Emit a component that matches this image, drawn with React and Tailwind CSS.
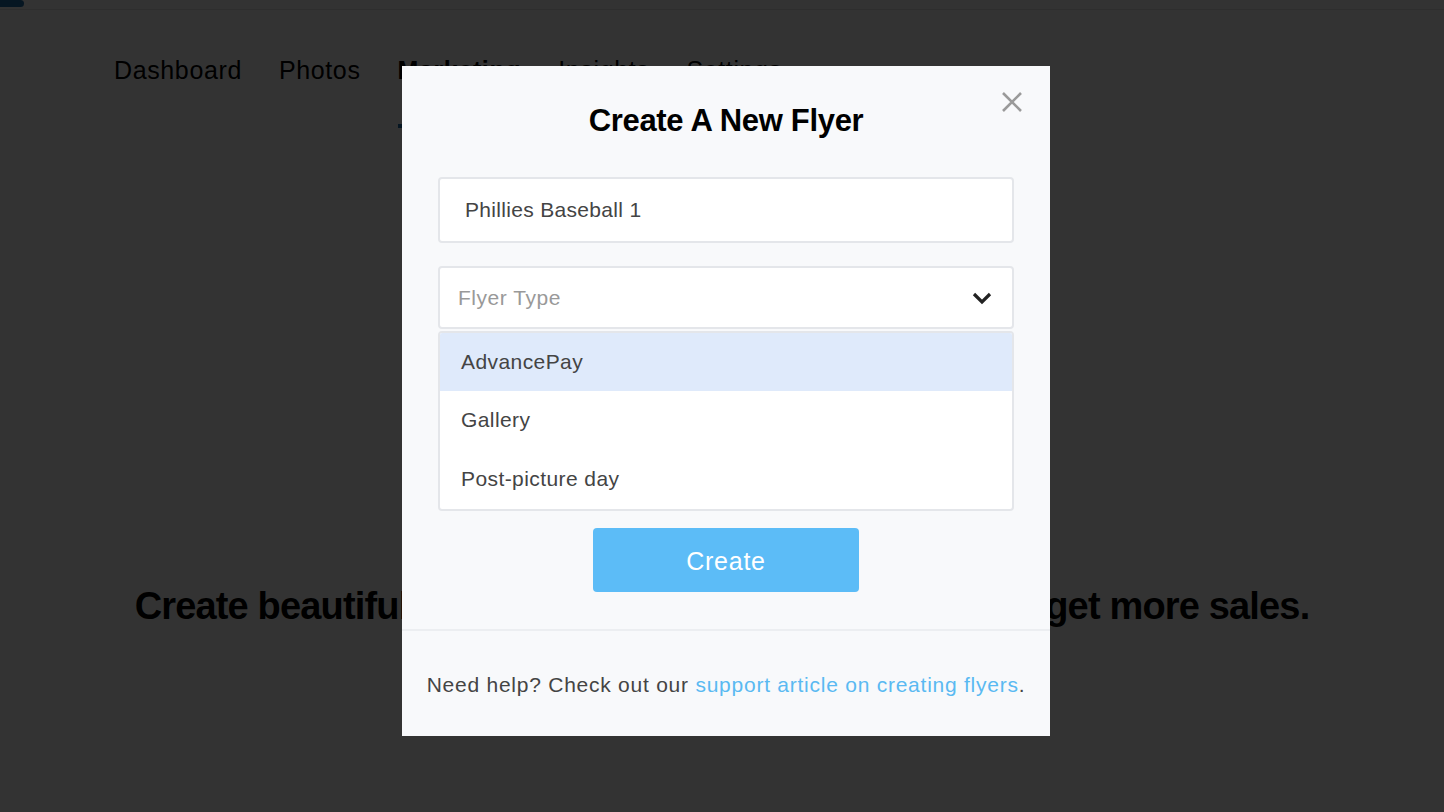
import React from "react";

const navItems = ["Dashboard", "Photos", "Marketing", "Insights", "Settings"];

const App = () => {
  return (
    <div
      className="relative w-full h-[812px] overflow-hidden bg-white"
      style={{ fontFamily: '"Liberation Sans", Arial, sans-serif' }}
    >
      {/* top bar */}
      <div className="h-[10px] border-b border-[#e6e6e6] relative">
        <div className="absolute left-0 top-0 w-[24px] h-[7px] rounded-r-full bg-[#1f6ea8]" />
      </div>

      {/* nav */}
      <nav className="flex items-center gap-[37px] pl-[114px] pt-[42px] text-[25px] tracking-[0.025em] text-black">
        {navItems.map((item) => (
          <div
            key={item}
            className={
              item === "Marketing"
                ? "font-bold pb-[34px] border-b-[4px] border-[#1f6ea8] -mb-[38px]"
                : ""
            }
          >
            {item}
          </div>
        ))}
      </nav>

      {/* hero heading */}
      <h1 className="mt-[488px] text-center text-[38px] font-bold tracking-[-0.022em] text-black">
        Create beautiful flyers to share with your clients and get more sales.
      </h1>

      {/* overlay */}
      <div className="absolute inset-0 bg-black/80 flex justify-center items-start pt-[66px] pl-[8px]">
        <div className="relative w-[648px] h-[670px] bg-[#f8f9fb] flex flex-col">
          <button className="absolute right-[27px] top-[25px] w-[22px] h-[22px] text-[#9a9a9a]">
            <svg viewBox="0 0 22 22" className="w-full h-full" fill="none" stroke="currentColor" strokeWidth="2.6">
              <path d="M2 2 L20 20 M20 2 L2 20" />
            </svg>
          </button>

          <div className="px-[36px] pt-[35px] flex flex-col">
            <h2 className="text-center text-[31px] leading-[40px] font-bold tracking-[-0.01em] text-black">
              Create A New Flyer
            </h2>

            <div className="mt-[36px] h-[66px] bg-white border-2 border-[#e4e6ea] rounded-[4px] flex items-center px-[25px] text-[21px] tracking-[0.015em] text-[#444]">
              Phillies Baseball 1
            </div>

            <div className="mt-[23px] h-[63px] bg-white border-2 border-[#e4e6ea] rounded-[4px] flex items-center justify-between pl-[18px] pr-[20px] text-[21px] tracking-[0.025em] text-[#999]">
              <span>Flyer Type</span>
              <svg viewBox="0 0 20 14" className="w-[20px] h-[14px]" fill="none" stroke="#222" strokeWidth="3.2">
                <path d="M2 3 L10 11 L18 3" />
              </svg>
            </div>

            <div className="mt-[2px] bg-white border-2 border-[#e4e6ea] rounded-[4px] overflow-hidden text-[21px] tracking-[0.02em] text-[#444]">
              <div className="h-[58px] bg-[#dfeafb] flex items-center px-[21px]">AdvancePay</div>
              <div className="h-[58px] flex items-center px-[21px]">Gallery</div>
              <div className="h-[60px] flex items-center px-[21px]">Post-picture day</div>
            </div>

            <button className="mt-[17px] mx-auto w-[266px] h-[64px] rounded-[4px] bg-[#5cbcf7] text-white text-[25px] tracking-[0.03em] pt-[3px]">
              Create
            </button>
          </div>

          <div className="mt-[37px] border-t-2 border-[#eceef1] flex-1 flex items-center justify-center text-[21px] tracking-[0.036em] text-[#444] pt-[2px]">
            <p>
              Need help? Check out our{" "}
              <span className="text-[#5ab9f2]">support article on creating flyers</span>.
            </p>
          </div>
        </div>
      </div>
    </div>
  );
};

export default App;
